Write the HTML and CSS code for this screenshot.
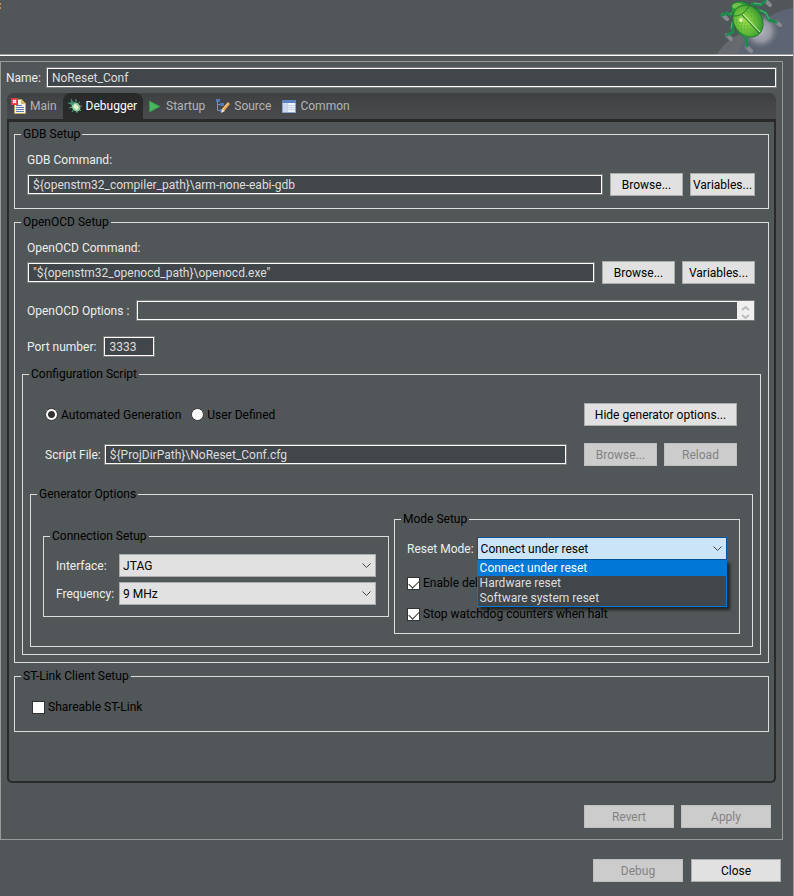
FILE: index.html
```html
<!DOCTYPE html>
<html lang="en">
<head>
    <meta charset="UTF-8">
    <meta name="viewport" content="width=device-width, initial-scale=1.0">
    <title>Debug Configurations</title>
    <link rel="stylesheet" href="styles.css">
</head>
<body>
    <header class="banner">
        <svg class="banner-mark" width="1" height="7" viewBox="0 0 1 7"><path fill="#d98b45" d="M0 0h1v2H0zM0 4h1v2H0z"/></svg>
        <svg class="banner-bug" width="79" height="54" viewBox="0 0 79 54">
            <defs>
                <radialGradient id="shade" cx="50%" cy="50%" r="50%">
                    <stop offset="0" stop-color="#b0b2be"/>
                    <stop offset="0.6" stop-color="#9497a1"/>
                    <stop offset="1" stop-color="#6b7079" stop-opacity="0.2"/>
                </radialGradient>
                <radialGradient id="shell" cx="40%" cy="45%" r="65%">
                    <stop offset="0" stop-color="#9bdc48"/>
                    <stop offset="0.6" stop-color="#5fb738"/>
                    <stop offset="1" stop-color="#2d9130"/>
                </radialGradient>
            </defs>
            <path fill="#666a6e" d="M3 54Q12 39 28 33L60 54z"/>
            <path fill="#5d6574" d="M24 54Q34 26 60 14Q70 9 79 8V54z"/>
            <circle cx="47" cy="31" r="17" fill="url(#shade)"/>
            <g stroke="#85888e" stroke-width="4" stroke-linecap="round">
                <path d="M9 15l4 4M13 35l4 4M33 47l4 4M62 22l4 3M52 1l4 4"/>
            </g>
            <g fill="none" stroke="#1c8a4d" stroke-width="3" stroke-linecap="round" stroke-linejoin="round">
                <path d="M20 13l-4 2-3-2-5 2M19 22l-1 6 1 4-6 3M25 32l7 5 1 9M44 10l8 3 3 7 7 2M38 4l9 1 4-4"/>
            </g>
            <g fill="none" stroke="#56b67b" stroke-width="1" stroke-linecap="round">
                <path d="M20 12l-4 2M18 23l-1 5M27 33l5 4M46 10l6 3 3 6M40 3l7 1"/>
            </g>
            <path fill="#2d9a3d" stroke="#1b7a31" d="M18 12Q15 4 22 2Q31 0 36 6L30 14L20 17z"/>
            <ellipse cx="24" cy="6" rx="6" ry="3" fill="#72bd50"/>
            <ellipse cx="34" cy="21" rx="14" ry="17" transform="rotate(-35 34 21)" fill="url(#shell)" stroke="#217d2a"/>
            <path d="M19 16Q29 17 35 6" fill="none" stroke="#1f7d2f"/>
            <path d="M29 14L46 32" stroke="#d2f0bd"/>
            <path d="M28 15L45 33" stroke="#1b6e2b"/>
            <path d="M22 20h8M22 23h10M24 26h12M27 29h11M34 12h8M37 16h8M40 20h6" stroke="#439f36" stroke-dasharray="1 2"/>
            <circle cx="27" cy="20" r="2" fill="#d9f0b4"/>
        </svg>
    </header>

    <main class="panel">
        <div class="row name-row">
            <label for="name">Name:</label>
            <input type="text" class="field grow" id="name" value="NoReset_Conf">
        </div>

        <div class="folder">
            <nav class="tabs">
                <a class="tab" href="#main">
                    <svg width="16" height="16" viewBox="0 0 16 16">
                        <path fill="#f7f5ea" stroke="#c0a45c" d="M3.500 1.500h7l4 4v10h-11z"/>
                        <path fill="#d7b765" d="M10 1v5h5z"/>
                        <path stroke="#5b78b3" d="M5 7.500h6M5 9.500h8M5 11.500h8M5 13.500h8"/>
                        <path fill="#e0384a" d="M0 0h7v7H0z"/>
                        <path stroke="#fff" stroke-width="1.500" d="M2 2l3 3M5 2l-3 3"/>
                    </svg>
                    Main
                </a>
                <a class="tab active" href="#debugger">
                    <svg width="16" height="16" viewBox="0 0 16 16">
                        <path fill="none" stroke="#48a587" d="M1 5l4 1M4 1l2 4M9 1v3M13 4l-3 2M15 8h-4M2 10l4-1M5 14l2-3M10 15v-3M14 13l-3-3"/>
                        <ellipse cx="9" cy="9" rx="4" ry="5" transform="rotate(-40 9 9)" fill="#8cc9a0"/>
                        <ellipse cx="9" cy="9" rx="2" ry="3" transform="rotate(-40 9 9)" fill="#e3f7c8"/>
                        <circle cx="5" cy="5" r="2" fill="#3f9176"/>
                    </svg>
                    Debugger
                </a>
                <a class="tab" href="#startup">
                    <svg width="16" height="16" viewBox="0 0 16 16">
                        <path fill="#4cb560" stroke="#2f9447" d="M2.500 3L13 8.500L2.500 14z"/>
                    </svg>
                    Startup
                </a>
                <a class="tab" href="#source">
                    <svg width="16" height="16" viewBox="0 0 16 16">
                        <path fill="none" stroke="#7d93bb" d="M2.500 3v9.500H6M2.500 6.500H6"/>
                        <path fill="#4f78bd" d="M1 1h4v3H1zM5 5h4v3H5zM5 11h4v3H5z"/>
                        <path stroke="#e3a455" stroke-width="3" d="M14 5L8 12"/>
                        <path stroke="#f6d79c" d="M13 5L8 11"/>
                        <path fill="#f4e2c4" d="M6 15l1-4 3 2z"/>
                    </svg>
                    Source
                </a>
                <a class="tab" href="#common">
                    <svg width="16" height="16" viewBox="0 0 16 16">
                        <path fill="#eef2fa" stroke="#8fa5cf" d="M1.500 2.500h13v12h-13z"/>
                        <path fill="#5f82c4" d="M1 2h14v3H1z"/>
                        <path fill="#cddaf0" d="M2 5h4v9H2z"/>
                        <path stroke="#c5d1e8" d="M2 7.500h12M2 9.500h12M2 11.500h12M6.500 5v9"/>
                    </svg>
                    Common
                </a>
            </nav>

            <div class="page">
                <fieldset class="group">
                    <legend>GDB Setup</legend>
                    <div class="group-body">
                        <label class="caption" for="gdb">GDB Command:</label>
                        <div class="row">
                            <input type="text" class="field grow" id="gdb" value="${openstm32_compiler_path}\arm-none-eabi-gdb">
                            <button class="btn">Browse...</button>
                            <button class="btn btn-narrow">Variables...</button>
                        </div>
                    </div>
                </fieldset>

                <fieldset class="group">
                    <legend>OpenOCD Setup</legend>
                    <div class="group-body openocd">
                        <label class="caption" for="openocd">OpenOCD Command:</label>
                        <div class="row">
                            <input type="text" class="field grow" id="openocd" value="&quot;${openstm32_openocd_path}\openocd.exe&quot;">
                            <button class="btn">Browse...</button>
                            <button class="btn">Variables...</button>
                        </div>
                        <div class="row options-row">
                            <label for="options">OpenOCD Options :</label>
                            <div class="scroll-field">
                                <textarea class="field" id="options" rows="1"></textarea>
                                <svg class="scroller" width="17" height="19" viewBox="0 0 17 19">
                                    <path fill="#f0f0f0" d="M0 0h17v19H0z"/>
                                    <path fill="none" stroke="#bbb" stroke-width="2" d="M5 9l3.500-3L12 9M5 14l3.500 3L12 14"/>
                                </svg>
                            </div>
                        </div>
                        <div class="row options-row">
                            <label for="port">Port number:</label>
                            <input type="text" class="field port" id="port" value="3333">
                        </div>
                    </div>

                    <fieldset class="group nested">
                        <legend>Configuration Script</legend>
                        <div class="script-body">
                            <div class="row radio-row">
                                <label class="check"><input type="radio" name="script" checked>Automated Generation</label>
                                <label class="check"><input type="radio" name="script">User Defined</label>
                                <button class="btn btn-wide">Hide generator options...</button>
                            </div>
                            <div class="row script-row">
                                <div class="row labelled grow">
                                    <label for="script-file">Script File:</label>
                                    <input type="text" class="field grow" id="script-file" value="${ProjDirPath}\NoReset_Conf.cfg">
                                </div>
                                <button class="btn" disabled>Browse...</button>
                                <button class="btn" disabled>Reload</button>
                            </div>
                        </div>

                        <fieldset class="group nested">
                            <legend>Generator Options</legend>
                            <div class="generator">
                                <fieldset class="group">
                                    <legend>Connection Setup</legend>
                                    <div class="setup connection">
                                        <label for="interface">Interface:</label>
                                        <div class="combo">
                                            <select id="interface"><option>JTAG</option></select>
                                            <svg class="chevron" width="9" height="6" viewBox="0 0 9 6"><path d="M0.500 0.500l4 4 4-4"/></svg>
                                        </div>
                                        <label for="frequency">Frequency:</label>
                                        <div class="combo">
                                            <select id="frequency"><option>9 MHz</option></select>
                                            <svg class="chevron" width="9" height="6" viewBox="0 0 9 6"><path d="M0.500 0.500l4 4 4-4"/></svg>
                                        </div>
                                    </div>
                                </fieldset>

                                <fieldset class="group">
                                    <legend>Mode Setup</legend>
                                    <div class="setup">
                                        <div class="row labelled">
                                            <label for="reset">Reset Mode:</label>
                                            <div class="combo open">
                                                <select id="reset">
                                                    <option>Connect under reset</option>
                                                    <option>Hardware reset</option>
                                                    <option>Software system reset</option>
                                                </select>
                                                <svg class="chevron" width="9" height="6" viewBox="0 0 9 6"><path d="M0.500 0.500l4 4 4-4"/></svg>
                                                <ul class="menu">
                                                    <li class="selected">Connect under reset</li>
                                                    <li>Hardware reset</li>
                                                    <li>Software system reset</li>
                                                </ul>
                                            </div>
                                        </div>
                                        <label class="check mode-check"><input type="checkbox" checked>Enable deb</label>
                                        <label class="check mode-check"><input type="checkbox" checked>Stop watchdog counters when halt</label>
                                    </div>
                                </fieldset>
                            </div>
                        </fieldset>
                    </fieldset>
                </fieldset>

                <fieldset class="group">
                    <legend>ST-Link Client Setup</legend>
                    <div class="client">
                        <label class="check"><input type="checkbox">Shareable ST-Link</label>
                    </div>
                </fieldset>
            </div>
        </div>

        <div class="actions">
            <button class="btn btn-action" disabled>Revert</button>
            <button class="btn btn-action" disabled>Apply</button>
        </div>
    </main>

    <footer class="actions footer">
        <button class="btn btn-action" disabled>Debug</button>
        <button class="btn btn-action">Close</button>
    </footer>
</body>
</html>
```
FILE: styles.css
```css
* {
    box-sizing: border-box;
}

body {
    margin: 0;
    min-height: 100vh;
    background-color: #515658;
    border-right: 1px solid #999;
    color: #eee;
    font-family: Roboto, sans-serif;
    font-size: 12px;
    line-height: 16px;
}

.banner {
    display: flex;
    justify-content: space-between;
    height: 56px;
    border-bottom: 1px solid #fff;
    box-shadow: inset 0 -1px #a0a0a0;
}

.banner-mark {
    margin-top: 3px;
}

.panel {
    margin: 5px 10px 0 0;
    padding: 5px 0 11px;
    border: 1px solid #999;
}

.row {
    display: flex;
    align-items: center;
    gap: 7px;
}

.name-row {
    gap: 5px;
    padding: 0 5px;
}

.grow {
    flex: 1;
    min-width: 0;
}

.field {
    height: 21px;
    padding: 0 5px;
    border: 1px solid #7a7a7a;
    box-shadow: inset 0 0 0 1px #fff;
    background-color: #41464a;
    color: #ddd;
    font: inherit;
}

/* Tabs */
.folder {
    margin: 5px 6px 0;
    border-radius: 8px 8px 5px 5px;
    border: 2px solid #2a2a2a;
    border-top: none;
}

.tabs {
    display: flex;
    height: 29px;
    margin: 0 -2px;
    border-bottom: 3px solid #2a2a2a;
    border-radius: 8px 8px 0 0;
    background: linear-gradient(#3f4042, #4a4b4e);
}

.tab {
    display: flex;
    align-items: center;
    gap: 3px;
    padding: 0 6px 0 4px;
    border-radius: 8px 8px 0 0;
    color: #b4b4b4;
    text-decoration: none;
}

.tab.active {
    background-color: #2a2a2a;
    color: #fff;
}

.page {
    padding: 5px 5px 43px;
}

/* Groups */
.group {
    min-width: 0;
    margin: 0 0 6px;
    padding: 0;
    border: 1px solid #dcdcdc;
}

.group legend {
    margin-left: 6px;
    padding: 0 2px;
    color: #000;
    line-height: 15px;
}

.group.nested {
    margin: 0 7px 7px;
}

.group-body {
    padding: 10px 13px 12px 12px;
}

.group-body.openocd {
    padding-bottom: 10px;
}

.caption {
    display: block;
    margin-bottom: 5px;
}

.options-row {
    margin-top: 15px;
}

.row + .options-row:not(:last-child) {
    margin-top: 16px;
}

.scroll-field {
    position: relative;
    flex: 1;
    height: 21px;
}

.scroll-field textarea {
    display: block;
    width: 100%;
    background-color: #515658;
    overflow: hidden;
    resize: none;
}

.scroller {
    position: absolute;
    top: 1px;
    right: 1px;
}

.port {
    width: 52px;
}

.script-body {
    padding: 21px 23px 21px 22px;
}

.radio-row {
    gap: 10px;
}

.script-row {
    margin-top: 17px;
}

.labelled {
    gap: 3px;
}

.script-row .labelled {
    margin-right: 10px;
}

.generator {
    display: grid;
    grid-template-columns: 1fr 1fr;
    gap: 5px;
    align-items: center;
    padding: 10px 12px 12px;
}

.generator .group {
    margin: 0;
}

.setup {
    padding: 10px 12px 11px;
}

.connection {
    display: grid;
    grid-template-columns: auto 1fr;
    gap: 5px;
    align-items: center;
}

.client {
    padding: 15px 17px 16px;
}

/* Controls */
.check {
    display: flex;
    align-items: center;
    gap: 3px;
    color: #000;
}

.check input {
    display: block;
    width: 13px;
    height: 13px;
    margin: 0;
    appearance: none;
    border: 1px solid #333;
    background-color: #fff;
}

.check input[type="radio"] {
    border-radius: 50%;
}

.check input[type="radio"]:checked {
    background-image: radial-gradient(circle, #333 3px, #fff 4px);
}

.check input[type="checkbox"]:checked {
    display: flex;
    align-items: flex-start;
    justify-content: center;
    padding-top: 2px;
}

.check input[type="checkbox"]:checked::before {
    content: "";
    width: 9px;
    height: 5px;
    border: solid #333;
    border-width: 0 0 1px 1px;
    transform: rotate(-45deg);
}

.mode-check {
    margin-top: 15px;
}

.combo {
    position: relative;
    flex: 1;
}

.combo select {
    display: block;
    width: 100%;
    height: 23px;
    padding: 0 3px;
    appearance: none;
    border: 1px solid #adadad;
    border-radius: 0;
    background-color: #e1e1e1;
    color: #000;
    font: inherit;
}

.combo.open select {
    border-color: #005499;
    background-color: #cce4f7;
}

.chevron {
    position: absolute;
    top: 9px;
    right: 5px;
    fill: none;
    stroke: #444;
}

.menu {
    position: absolute;
    top: 23px;
    left: 0;
    right: 0;
    z-index: 1;
    margin: 0;
    padding: 0;
    border: 1px solid #0078d7;
    background-color: #41464a;
    box-shadow: 3px 3px 3px rgba(0, 0, 0, 0.6);
    color: #ddd;
    line-height: 15px;
    list-style: none;
}

.menu li {
    padding: 0 2px;
}

.menu .selected {
    background-color: #0078d7;
    color: #fff;
}

.btn {
    width: 73px;
    height: 23px;
    padding: 0;
    border: 1px solid #adadad;
    background-color: #e1e1e1;
    color: #000;
    font: inherit;
    white-space: nowrap;
}

.btn:disabled {
    border-color: #bfbfbf;
    background-color: #ccc;
    color: #838383;
}

.btn-narrow {
    width: 65px;
}

.btn-wide {
    width: 153px;
    margin-left: auto;
}

.btn-action {
    width: 90px;
}

.actions {
    display: flex;
    justify-content: flex-end;
    gap: 7px;
    margin-top: 22px;
    padding: 0 11px;
}

.footer {
    gap: 8px;
    margin-top: 19px;
    padding: 0 12px 14px;
}
```
